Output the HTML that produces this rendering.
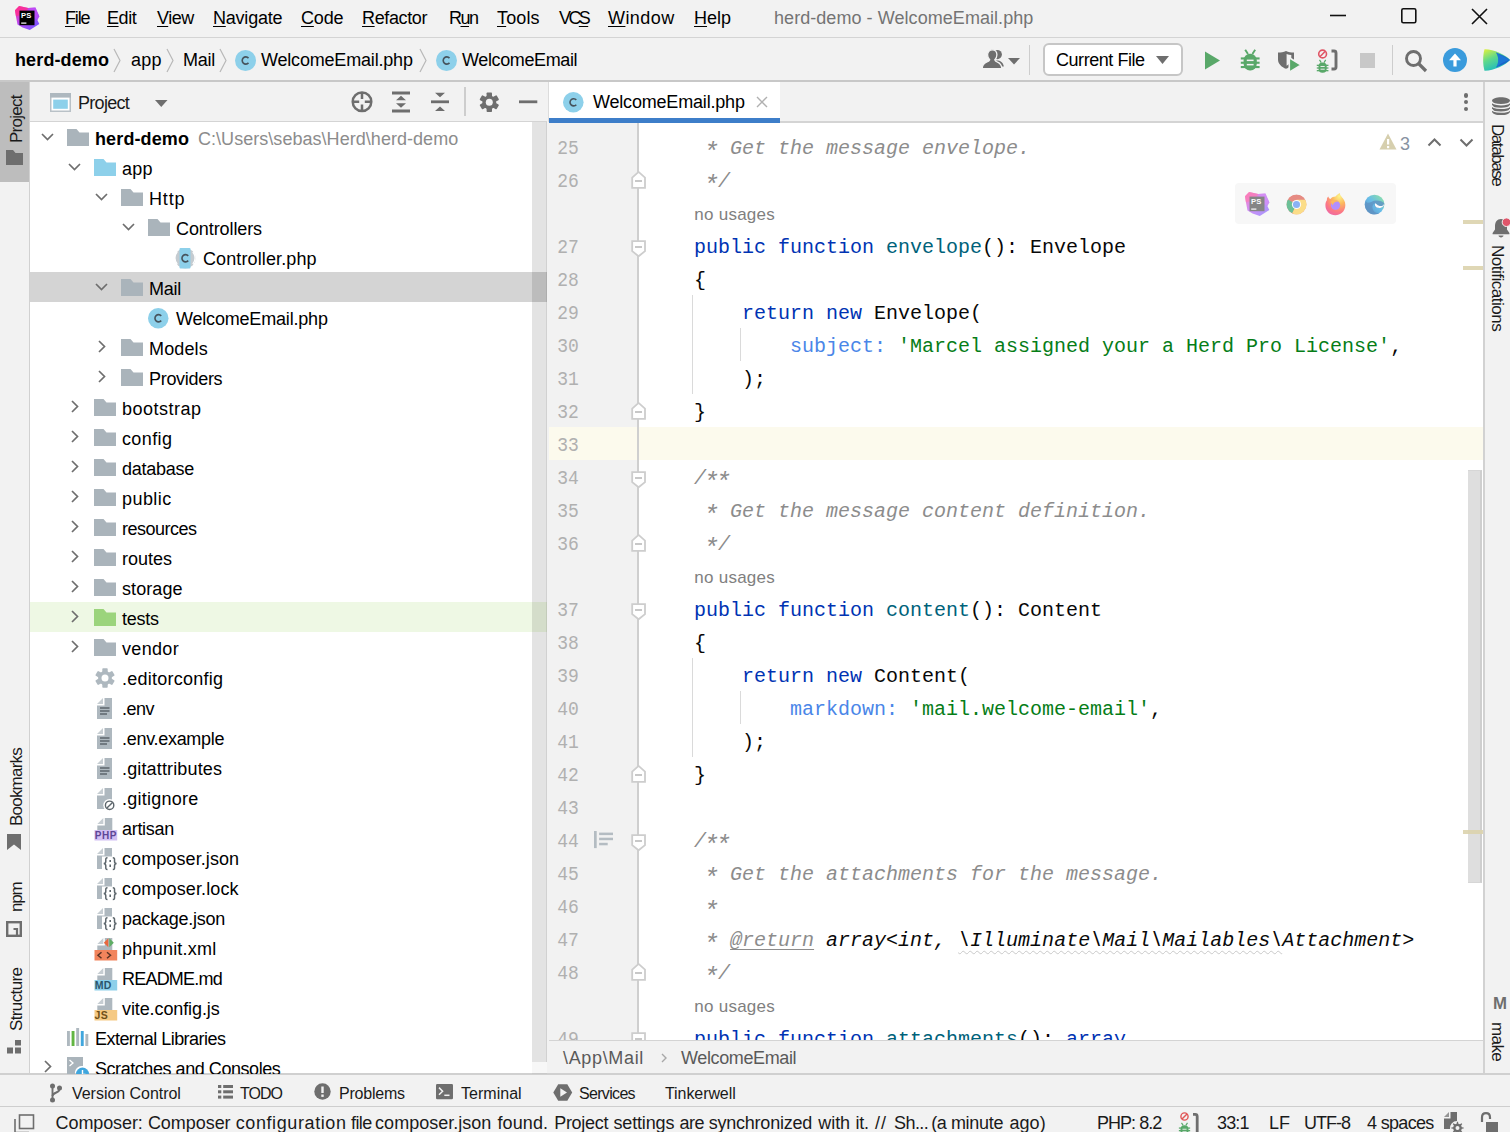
<!DOCTYPE html><html><head><meta charset="utf-8"><title>herd-demo - WelcomeEmail.php</title>
<style>

*{box-sizing:border-box;margin:0;padding:0}
html,body{width:1510px;height:1132px;overflow:hidden;background:#f2f2f2}
body{font-family:"Liberation Sans",sans-serif;font-size:18px;color:#000;position:relative}
.a{position:absolute}
.t{position:absolute;white-space:pre;line-height:1}
.u{text-decoration:underline;text-underline-offset:1.5px;text-decoration-thickness:1.2px}
.mono{font-family:"Liberation Mono",monospace}
svg{position:absolute;overflow:visible}
.vt{position:absolute;white-space:pre;transform-origin:0 0;font-size:16px;line-height:1;color:#1a1a1a}
/* code */
.ln{position:absolute;left:557.3px;font-family:"Liberation Mono",monospace;font-size:18px;color:#b0b0b0;line-height:33px;height:33px;white-space:pre;transform:scaleY(1.09);transform-origin:0 60%}
.cl{position:absolute;left:647px;font-family:"Liberation Mono",monospace;font-size:20px;line-height:33px;height:33px;white-space:pre;color:#080808}
.k{color:#0033b3}.f{color:#00627a}.s{color:#067d17}.p{color:#4a86e8}.c{color:#8c8c8c;font-style:italic}
.ci{font-style:italic;color:#080808}
.ast{display:inline-block;transform:translate(-1px,4.5px) scale(1.3,1.25)}
.nu{position:absolute;left:694.3px;font-size:17px;letter-spacing:.25px;color:#808080;line-height:33px;height:33px;white-space:pre}
.tr{position:absolute;left:30px;width:517px;height:30px}
.tt{position:absolute;white-space:pre;line-height:30px;height:30px;font-size:18px;margin-top:2.3px}

</style></head><body>
<div class="a" style="left:0px;top:0px;width:1510px;height:37px;background:#f2f2f2;"></div>
<div class="a" style="left:0px;top:37px;width:1510px;height:1px;background:#d4d4d4;"></div>
<div class="a" style="left:0px;top:38px;width:1510px;height:43px;background:#f2f2f2;"></div>
<div class="a" style="left:0px;top:80.3px;width:1510px;height:1.7px;background:#c8c8c8;"></div>
<div class="a" style="left:0px;top:82px;width:29px;height:993px;background:#f2f2f2;"></div>
<div class="a" style="left:0px;top:82px;width:29px;height:100px;background:#bdbdbd;"></div>
<div class="a" style="left:29px;top:82px;width:1px;height:993px;background:#d1d1d1;"></div>
<div class="a" style="left:30px;top:82px;width:517px;height:39px;background:#f2f2f2;"></div>
<div class="a" style="left:30px;top:121px;width:517px;height:1px;background:#d4d4d4;"></div>
<div class="a" style="left:30px;top:122px;width:517px;height:953px;background:#ffffff;"></div>
<div class="a" style="left:546.6px;top:82px;width:2.4px;height:993px;background:#f2f2f2;"></div>
<div class="a" style="left:547.6px;top:82px;width:1px;height:40px;background:#dcdcdc;"></div>
<div class="a" style="left:549px;top:82px;width:935px;height:40px;background:#f2f2f2;"></div>
<div class="a" style="left:549px;top:82px;width:231px;height:36px;background:#ffffff;"></div>
<div class="a" style="left:549px;top:121px;width:935px;height:2px;background:#d4d4d4;"></div>
<div class="a" style="left:549px;top:118px;width:231px;height:5px;background:#3d7ec9;"></div>
<div class="a" style="left:549px;top:123px;width:935px;height:918px;background:#ffffff;"></div>
<div class="a" style="left:549px;top:123px;width:89px;height:918px;background:#f2f2f2;"></div>
<div class="a" style="left:637.1px;top:123px;width:1.8px;height:918px;background:#cfcfcf;"></div>
<div class="a" style="left:549px;top:1041px;width:935px;height:33px;background:#f2f2f2;"></div>
<div class="a" style="left:549px;top:1040px;width:935px;height:1px;background:#d4d4d4;"></div>
<div class="a" style="left:1484px;top:82px;width:26px;height:993px;background:#f2f2f2;"></div>
<div class="a" style="left:1483px;top:82px;width:2px;height:993px;background:#d2d2d2;"></div>
<div class="a" style="left:0px;top:1073px;width:1510px;height:2px;background:#d0d0d0;"></div>
<div class="a" style="left:0px;top:1075px;width:1510px;height:31px;background:#f2f2f2;"></div>
<div class="a" style="left:0px;top:1106px;width:1510px;height:1.6px;background:#cecece;"></div>
<div class="a" style="left:0px;top:1107px;width:1510px;height:25px;background:#f2f2f2;"></div>
<svg style="left:15.0px;top:6.0px;opacity:1;" width="25" height="24.0" viewBox="0 0 25 24"><defs><linearGradient id="psg27" x1="0" y1="0" x2="1" y2="1"><stop offset="0" stop-color="#ff2d90"/><stop offset=".45" stop-color="#b74af7"/><stop offset="1" stop-color="#6b57ff"/></linearGradient></defs><path d="M0 4.3 L4.1 0 L13.2 2 L20.4 1.5 L24.3 10.3 L22.4 13.9 L24.3 17.9 L14.8 24 L7.6 21.4 L2.5 18.6 L0.9 9.9 Z" fill="url(#psg27)"/><path d="M0 4.3 L4.1 0 L13.2 2 L9 9 L0.9 9.9 Z" fill="#ff2d90" opacity=".75"/><path d="M13.2 2 L20.4 1.5 L24.3 10.3 L22.4 13.9 L17 10 Z" fill="#c04cf5" opacity=".7"/><rect x="4.5" y="4.6" width="15" height="14.6" fill="#000"/><rect x="6.2" y="16.5" width="5.2" height="1.2" fill="#fff"/><text x="5.9" y="12.2" font-family="Liberation Sans" font-weight="bold" font-size="7.6" fill="#fff" letter-spacing="0.2">PS</text></svg>
<div class="t" style="left:65px;top:9px;font-size:18px;color:#000;letter-spacing:-1.169px;"><span class="u">F</span>ile</div>
<div class="t" style="left:107px;top:9px;font-size:18px;color:#000;letter-spacing:-0.44px;"><span class="u">E</span>dit</div>
<div class="t" style="left:157px;top:9px;font-size:18px;color:#000;letter-spacing:-0.464px;"><span class="u">V</span>iew</div>
<div class="t" style="left:213px;top:9px;font-size:18px;color:#000;letter-spacing:-0.22px;"><span class="u">N</span>avigate</div>
<div class="t" style="left:301px;top:9px;font-size:18px;color:#000;letter-spacing:-0.14px;"><span class="u">C</span>ode</div>
<div class="t" style="left:362px;top:9px;font-size:18px;color:#000;letter-spacing:-0.36px;"><span class="u">R</span>efactor</div>
<div class="t" style="left:449px;top:9px;font-size:18px;color:#000;letter-spacing:-1.511px;">R<span class="u">u</span>n</div>
<div class="t" style="left:497px;top:9px;font-size:18px;color:#000;letter-spacing:0.145px;"><span class="u">T</span>ools</div>
<div class="t" style="left:559px;top:9px;font-size:18px;color:#000;letter-spacing:-2.603px;">VC<span class="u">S</span></div>
<div class="t" style="left:608px;top:9px;font-size:18px;color:#000;letter-spacing:0.436px;"><span class="u">W</span>indow</div>
<div class="t" style="left:694px;top:9px;font-size:18px;color:#000;letter-spacing:0.026px;"><span class="u">H</span>elp</div>
<div class="t" style="left:774px;top:9px;font-size:18px;color:#747474;letter-spacing:0.057px;">herd-demo - WelcomeEmail.php</div>
<svg style="left:1329px;top:8px;" width="20" height="20" viewBox="0 0 20 20"><path d="M1 7.5 H17" stroke="#111" stroke-width="1.6"/></svg>
<svg style="left:1400px;top:7px;" width="18" height="18" viewBox="0 0 18 18"><rect x="1.8" y="1.8" width="14" height="14" rx="1.5" fill="none" stroke="#111" stroke-width="1.6"/></svg>
<svg style="left:1471px;top:8px;" width="18" height="18" viewBox="0 0 18 18"><path d="M1 1 L16 16 M16 1 L1 16" stroke="#111" stroke-width="1.6"/></svg>
<div class="t" style="left:15px;top:51px;font-size:18px;color:#000;letter-spacing:0.124px;font-weight:bold;">herd-demo</div>
<svg style="left:113px;top:48px;" width="8" height="25" viewBox="0 0 8 25"><path d="M1 1 L7 12.5 L1 24" fill="none" stroke="#b8b8b8" stroke-width="1.2"/></svg>
<div class="t" style="left:131px;top:51px;font-size:18px;color:#000;letter-spacing:0.182px;">app</div>
<svg style="left:166px;top:48px;" width="8" height="25" viewBox="0 0 8 25"><path d="M1 1 L7 12.5 L1 24" fill="none" stroke="#b8b8b8" stroke-width="1.2"/></svg>
<div class="t" style="left:183px;top:51px;font-size:18px;color:#000;letter-spacing:-0.269px;">Mail</div>
<svg style="left:219px;top:48px;" width="8" height="25" viewBox="0 0 8 25"><path d="M1 1 L7 12.5 L1 24" fill="none" stroke="#b8b8b8" stroke-width="1.2"/></svg>
<svg style="left:234.5px;top:50.0px;" width="21" height="21" viewBox="0 0 21 21"><circle cx="10.5" cy="10.5" r="10.5" fill="#8dd0ea"/><path d="M13 7.6 A3.6 3.6 0 1 0 13 12.4" fill="none" stroke="#46535c" stroke-width="1.6" transform="translate(0.5 0.5)"/></svg>
<div class="t" style="left:261px;top:51px;font-size:18px;color:#000;letter-spacing:-0.188px;">WelcomeEmail.php</div>
<svg style="left:419px;top:48px;" width="8" height="25" viewBox="0 0 8 25"><path d="M1 1 L7 12.5 L1 24" fill="none" stroke="#b8b8b8" stroke-width="1.2"/></svg>
<svg style="left:435.5px;top:50.0px;" width="21" height="21" viewBox="0 0 21 21"><circle cx="10.5" cy="10.5" r="10.5" fill="#8dd0ea"/><path d="M13 7.6 A3.6 3.6 0 1 0 13 12.4" fill="none" stroke="#46535c" stroke-width="1.6" transform="translate(0.5 0.5)"/></svg>
<div class="t" style="left:462px;top:51px;font-size:18px;color:#000;letter-spacing:-0.372px;">WelcomeEmail</div>
<svg style="left:982px;top:49px;" width="23" height="20" viewBox="0 0 23 20"><g fill="#6e6e6e"><circle cx="15.3" cy="5.6" r="4.6"/><path d="M12 12 C16 10.5 21 12 21.8 17.5 H14 Z"/><g stroke="#f2f2f2" stroke-width="1.3"><path d="M10.3 0.8 C13.2 0.8 14.9 3 14.9 5.8 C14.9 8 14 9.8 12.8 10.8 C13 12 14 12.6 15.5 13.2 C18.5 14.4 19.6 16 19.8 19.6 H0.2 C0.4 16 1.5 14.4 4.5 13.2 C6.3 12.5 7.4 12 7.7 10.8 C6.5 9.8 5.6 8 5.6 5.8 C5.6 3 7.4 0.8 10.3 0.8 Z"/></g></g></svg>
<svg style="left:1008px;top:58px;" width="12" height="7" viewBox="0 0 12 7"><path d="M0 0 H12 L6 6.5 Z" fill="#6e6e6e"/></svg>
<div class="a" style="left:1029px;top:45px;width:1px;height:30px;background:#cdcdcd;"></div>
<div class="a" style="left:1043px;top:43px;width:140px;height:32.5px;background:#fff;border:2px solid #c6c6c6;border-radius:6px;"></div>
<div class="t" style="left:1056px;top:51px;font-size:18px;color:#000;letter-spacing:-0.45px;">Current File</div>
<svg style="left:1156px;top:56px;" width="14" height="9" viewBox="0 0 14 9"><path d="M0 0 H13 L6.5 8 Z" fill="#6e6e6e"/></svg>
<svg style="left:1204px;top:51px;" width="17" height="19" viewBox="0 0 17 19"><path d="M1 0.5 L16 9.5 L1 18.5 Z" fill="#59a869"/></svg>
<svg style="left:1238px;top:48px;" width="24" height="24" viewBox="0 0 24 24"><g transform="translate(12.2 12) scale(1.0)"><rect x="-6.6" y="-6.2" width="13.2" height="16.6" rx="6.3" ry="6.6" fill="#59a869"/><g fill="#59a869"><rect x="-9.4" y="-2.6" width="5" height="2.1"/><rect x="-9.4" y="1.7" width="5" height="2.1"/><rect x="-9.4" y="6" width="5" height="2.1"/><rect x="4.4" y="-2.6" width="5" height="2.1"/><rect x="4.4" y="1.7" width="5" height="2.1"/><rect x="4.4" y="6" width="5" height="2.1"/></g><path d="M-5 -10.3 L-2.2 -6 M5 -10.3 L2.2 -6" stroke="#59a869" stroke-width="1.9" fill="none"/><rect x="-3.4" y="-0.4" width="6.8" height="1.5" fill="#f2f2f2"/><rect x="-3.4" y="3.9" width="6.8" height="1.5" fill="#f2f2f2"/></g></svg>
<svg style="left:1278px;top:51px;" width="24" height="22" viewBox="0 0 24 22"><path d="M0 1.6 C3 1.6 5.5 1 8 0 C10.5 1 13 1.6 16 1.6 V8.5 C16 13 12 16.3 8 17.8 C4 16.3 0 13 0 8.5 Z" fill="#6e6e6e"/><path d="M8.6 3 C10.2 3.6 11.8 4 13.3 4.1 V8.5 C13.3 11 11.3 13.3 8.6 14.7 Z" fill="#f2f2f2"/><path d="M11.3 6.8 L23.2 14 L11.3 21.2 Z" fill="#59a869" stroke="#f2f2f2" stroke-width="1.6"/></svg>
<svg style="left:1316px;top:48px;" width="24" height="26" viewBox="0 0 24 26"><path d="M15.5 3 H18 A2 2 0 0 1 20 5 V19 A2 2 0 0 1 18 21 H15.5" fill="none" stroke="#6e6e6e" stroke-width="2.9"/><circle cx="6.6" cy="6" r="3.9" fill="none" stroke="#e05565" stroke-width="1.6"/><path d="M3.9 8.7 L9.3 3.3" stroke="#e05565" stroke-width="1.6"/><g transform="translate(6.6 18.3) scale(0.62)"><rect x="-6.6" y="-6.2" width="13.2" height="16.6" rx="6.3" ry="6.6" fill="#59a869"/><g fill="#59a869"><rect x="-9.4" y="-2.6" width="5" height="2.1"/><rect x="-9.4" y="1.7" width="5" height="2.1"/><rect x="-9.4" y="6" width="5" height="2.1"/><rect x="4.4" y="-2.6" width="5" height="2.1"/><rect x="4.4" y="1.7" width="5" height="2.1"/><rect x="4.4" y="6" width="5" height="2.1"/></g><path d="M-5 -10.3 L-2.2 -6 M5 -10.3 L2.2 -6" stroke="#59a869" stroke-width="1.9" fill="none"/><rect x="-3.4" y="-0.4" width="6.8" height="1.5" fill="#f2f2f2"/><rect x="-3.4" y="3.9" width="6.8" height="1.5" fill="#f2f2f2"/></g></svg>
<div class="a" style="left:1360px;top:53px;width:15px;height:15px;background:#c8c8c8;"></div>
<div class="a" style="left:1392px;top:45px;width:1px;height:30px;background:#cdcdcd;"></div>
<svg style="left:1404px;top:49px;" width="24" height="24" viewBox="0 0 24 24"><circle cx="9.5" cy="9.5" r="7" fill="none" stroke="#6e6e6e" stroke-width="2.9"/><path d="M14.5 14.5 L22 22" stroke="#6e6e6e" stroke-width="3.2"/></svg>
<svg style="left:1443px;top:48px;" width="24" height="24" viewBox="0 0 24 24"><circle cx="12" cy="12" r="12" fill="#3a9bdc"/><path d="M12 5.5 L18 12.2 H13.6 V18.5 H10.4 V12.2 H6 Z" fill="#fff"/></svg>
<svg style="left:1483px;top:49px;" width="27" height="22" viewBox="0 0 27 22"><defs><linearGradient id="spg" x1="0" y1="0" x2="0.6" y2="1"><stop offset="0" stop-color="#e6f23a"/><stop offset=".45" stop-color="#5fd98a"/><stop offset="1" stop-color="#12b5c9"/></linearGradient></defs><path d="M1.5 0.3 C10 0 23 6 27 11 C23 16 10 22 1.5 21.7 C-0.3 16 -0.3 6 1.5 0.3 Z" fill="url(#spg)"/><path d="M13 3.5 C19 5.5 24 8.5 27 11 C24 13.5 19 16.5 13 18.5 C16 14 16 8 13 3.5 Z" fill="#1b63c9"/><path d="M13 3.5 C16 8 16 14 13 18.5 C17 15 20 13 27 11 Z" fill="#1f86e0" opacity=".55"/></svg>
<svg style="left:49.5px;top:93px;" width="21" height="19" viewBox="0 0 21 19"><rect x="0.75" y="0.75" width="19.5" height="17.5" fill="#fff" stroke="#b9c1c7" stroke-width="1.5"/><rect x="0" y="0" width="21" height="4.6" fill="#aeb8bf"/><rect x="3.2" y="6.6" width="14.6" height="9.2" fill="#8dd0ea"/></svg>
<div class="t" style="left:78px;top:94px;font-size:18px;color:#1a1a1a;letter-spacing:-0.704px;">Project</div>
<svg style="left:155px;top:100px;" width="13" height="8" viewBox="0 0 13 8"><path d="M0 0 H12.5 L6.25 7 Z" fill="#6e6e6e"/></svg>
<svg style="left:351px;top:91px;" width="22" height="22" viewBox="0 0 22 22"><circle cx="11" cy="10.8" r="9.3" fill="none" stroke="#6e6e6e" stroke-width="2.5"/><path d="M11 1.5 V8 M11 13.6 V20 M1.7 10.8 H8.2 M13.8 10.8 H20.3" stroke="#6e6e6e" stroke-width="2.5"/></svg>
<svg style="left:392px;top:91px;" width="18" height="22" viewBox="0 0 18 22"><path d="M0 2 H18 M0 20 H18" stroke="#6e6e6e" stroke-width="2.8"/><path d="M9 4.7 L14 9.2 H4 Z M9 16.8 L14 12.3 H4 Z" fill="#6e6e6e"/></svg>
<svg style="left:431px;top:91px;" width="18" height="22" viewBox="0 0 18 22"><path d="M0 10.8 H18" stroke="#6e6e6e" stroke-width="2.8"/><path d="M9 6.3 L14 1.8 H4 Z M9 15.4 L14 20 H4 Z" fill="#6e6e6e"/></svg>
<div class="a" style="left:464px;top:87px;width:1.5px;height:29px;background:#cdcdcd;"></div>
<svg style="left:479px;top:91.5px;" width="21" height="21" viewBox="0 0 21 21"><g transform="translate(10.3 10.3)" fill="#6e6e6e"><circle r="6.9"/><rect x="-2.7" y="-9.8" width="5.4" height="4.4" rx="0.8" transform="rotate(0.0)"/><rect x="-2.7" y="-9.8" width="5.4" height="4.4" rx="0.8" transform="rotate(60.0)"/><rect x="-2.7" y="-9.8" width="5.4" height="4.4" rx="0.8" transform="rotate(120.0)"/><rect x="-2.7" y="-9.8" width="5.4" height="4.4" rx="0.8" transform="rotate(180.0)"/><rect x="-2.7" y="-9.8" width="5.4" height="4.4" rx="0.8" transform="rotate(240.0)"/><rect x="-2.7" y="-9.8" width="5.4" height="4.4" rx="0.8" transform="rotate(300.0)"/><circle r="3.5" fill="#f2f2f2"/></g></svg>
<svg style="left:519px;top:100px;" width="19" height="4" viewBox="0 0 19 4"><path d="M0 1.8 H18.3" stroke="#6e6e6e" stroke-width="2.8"/></svg>
<svg style="left:562.7px;top:91.7px;" width="20.6" height="20.6" viewBox="0 0 20.6 20.6"><circle cx="10.3" cy="10.3" r="10.3" fill="#8dd0ea"/><path d="M13 7.6 A3.6 3.6 0 1 0 13 12.4" fill="none" stroke="#46535c" stroke-width="1.6" transform="translate(0.3000000000000007 0.3000000000000007)"/></svg>
<div class="t" style="left:593px;top:93px;font-size:18px;color:#000;letter-spacing:-0.188px;">WelcomeEmail.php</div>
<svg style="left:756px;top:96px;" width="12" height="12" viewBox="0 0 12 12"><path d="M1 1 L11 11 M11 1 L1 11" stroke="#b0b0b0" stroke-width="1.4"/></svg>
<div class="a" style="left:1463.8px;top:93.3px;width:4.4px;height:4.4px;border-radius:2.2px;background:#6e6e6e"></div>
<div class="a" style="left:1463.8px;top:100px;width:4.4px;height:4.4px;border-radius:2.2px;background:#6e6e6e"></div>
<div class="a" style="left:1463.8px;top:106.5px;width:4.4px;height:4.4px;border-radius:2.2px;background:#6e6e6e"></div>
<div class="a" style="left:0;top:122px;width:548px;height:952px;overflow:hidden"><div class="a" style="left:0;top:-122px;width:548px;height:1132px">
<svg style="left:41px;top:132.7px;" width="13" height="8" viewBox="0 0 13 8"><path d="M1 1 L6.5 6.5 L12 1" fill="none" stroke="#6e6e6e" stroke-width="1.7"/></svg>
<svg style="left:67px;top:128.5px;" width="22" height="17" viewBox="0 0 22 17"><path d="M0 0 H9.5 L12.5 3.5 H22 V17 H0 Z" fill="#aab4bb"/></svg>
<div class="tt" style="left:95px;top:122px;font-weight:bold;letter-spacing:0.124px;">herd-demo</div>
<div class="tt" style="left:198px;top:122px;color:#8c8c8c;letter-spacing:0.039px">C:\Users\sebas\Herd\herd-demo</div>
<svg style="left:68px;top:162.7px;" width="13" height="8" viewBox="0 0 13 8"><path d="M1 1 L6.5 6.5 L12 1" fill="none" stroke="#6e6e6e" stroke-width="1.7"/></svg>
<svg style="left:94px;top:158.5px;" width="22" height="17" viewBox="0 0 22 17"><path d="M0 0 H9.5 L12.5 3.5 H22 V17 H0 Z" fill="#8dd0ea"/></svg>
<div class="tt" style="left:122px;top:152px;letter-spacing:0.182px;">app</div>
<svg style="left:95px;top:192.7px;" width="13" height="8" viewBox="0 0 13 8"><path d="M1 1 L6.5 6.5 L12 1" fill="none" stroke="#6e6e6e" stroke-width="1.7"/></svg>
<svg style="left:121px;top:188.5px;" width="22" height="17" viewBox="0 0 22 17"><path d="M0 0 H9.5 L12.5 3.5 H22 V17 H0 Z" fill="#aab4bb"/></svg>
<div class="tt" style="left:149px;top:182px;letter-spacing:0.831px;">Http</div>
<svg style="left:122px;top:222.7px;" width="13" height="8" viewBox="0 0 13 8"><path d="M1 1 L6.5 6.5 L12 1" fill="none" stroke="#6e6e6e" stroke-width="1.7"/></svg>
<svg style="left:148px;top:218.5px;" width="22" height="17" viewBox="0 0 22 17"><path d="M0 0 H9.5 L12.5 3.5 H22 V17 H0 Z" fill="#aab4bb"/></svg>
<div class="tt" style="left:176px;top:212px;letter-spacing:-0.092px;">Controllers</div>
<svg style="left:175.3px;top:247.95px;" width="20.5" height="20.5" viewBox="0 0 20.5 20.5"><circle cx="10.25" cy="10.25" r="10.25" fill="#c4cbd0"/><rect x="4.5" y="0" width="11" height="20.5" rx="1" fill="#8dd0ea"/><path d="M2.2 4 A9 9 0 0 0 2.2 16" fill="none" stroke="#fff" stroke-width="1.3"/><path d="M17.8 4 A9 9 0 0 1 17.8 16" fill="none" stroke="#fff" stroke-width="1.3"/><path d="M13 7.6 A3.6 3.6 0 1 0 13 12.4" fill="none" stroke="#46535c" stroke-width="1.6" transform="translate(0.25 0.25)"/></svg>
<div class="tt" style="left:203px;top:242px;letter-spacing:0.118px;">Controller.php</div>
<div class="a" style="left:30px;top:272px;width:516.6px;height:30px;background:#d4d4d4;"></div>
<svg style="left:95px;top:282.7px;" width="13" height="8" viewBox="0 0 13 8"><path d="M1 1 L6.5 6.5 L12 1" fill="none" stroke="#6e6e6e" stroke-width="1.7"/></svg>
<svg style="left:121px;top:278.5px;" width="22" height="17" viewBox="0 0 22 17"><path d="M0 0 H9.5 L12.5 3.5 H22 V17 H0 Z" fill="#aab4bb"/></svg>
<div class="tt" style="left:149px;top:272px;letter-spacing:-0.269px;">Mail</div>
<svg style="left:148.3px;top:307.75px;" width="20.5" height="20.5" viewBox="0 0 20.5 20.5"><circle cx="10.25" cy="10.25" r="10.25" fill="#8dd0ea"/><path d="M13 7.6 A3.6 3.6 0 1 0 13 12.4" fill="none" stroke="#46535c" stroke-width="1.6" transform="translate(0.25 0.25)"/></svg>
<div class="tt" style="left:176px;top:302px;letter-spacing:-0.188px;">WelcomeEmail.php</div>
<svg style="left:98px;top:340.0px;" width="8" height="13" viewBox="0 0 8 13"><path d="M1 1 L6.5 6.5 L1 12" fill="none" stroke="#6e6e6e" stroke-width="1.7"/></svg>
<svg style="left:121px;top:338.5px;" width="22" height="17" viewBox="0 0 22 17"><path d="M0 0 H9.5 L12.5 3.5 H22 V17 H0 Z" fill="#aab4bb"/></svg>
<div class="tt" style="left:149px;top:332px;letter-spacing:0.136px;">Models</div>
<svg style="left:98px;top:370.0px;" width="8" height="13" viewBox="0 0 8 13"><path d="M1 1 L6.5 6.5 L1 12" fill="none" stroke="#6e6e6e" stroke-width="1.7"/></svg>
<svg style="left:121px;top:368.5px;" width="22" height="17" viewBox="0 0 22 17"><path d="M0 0 H9.5 L12.5 3.5 H22 V17 H0 Z" fill="#aab4bb"/></svg>
<div class="tt" style="left:149px;top:362px;letter-spacing:-0.303px;">Providers</div>
<svg style="left:71px;top:400.0px;" width="8" height="13" viewBox="0 0 8 13"><path d="M1 1 L6.5 6.5 L1 12" fill="none" stroke="#6e6e6e" stroke-width="1.7"/></svg>
<svg style="left:94px;top:398.5px;" width="22" height="17" viewBox="0 0 22 17"><path d="M0 0 H9.5 L12.5 3.5 H22 V17 H0 Z" fill="#aab4bb"/></svg>
<div class="tt" style="left:122px;top:392px;letter-spacing:0.481px;">bootstrap</div>
<svg style="left:71px;top:430.0px;" width="8" height="13" viewBox="0 0 8 13"><path d="M1 1 L6.5 6.5 L1 12" fill="none" stroke="#6e6e6e" stroke-width="1.7"/></svg>
<svg style="left:94px;top:428.5px;" width="22" height="17" viewBox="0 0 22 17"><path d="M0 0 H9.5 L12.5 3.5 H22 V17 H0 Z" fill="#aab4bb"/></svg>
<div class="tt" style="left:122px;top:422px;letter-spacing:0.373px;">config</div>
<svg style="left:71px;top:460.0px;" width="8" height="13" viewBox="0 0 8 13"><path d="M1 1 L6.5 6.5 L1 12" fill="none" stroke="#6e6e6e" stroke-width="1.7"/></svg>
<svg style="left:94px;top:458.5px;" width="22" height="17" viewBox="0 0 22 17"><path d="M0 0 H9.5 L12.5 3.5 H22 V17 H0 Z" fill="#aab4bb"/></svg>
<div class="tt" style="left:122px;top:452px;letter-spacing:-0.253px;">database</div>
<svg style="left:71px;top:490.0px;" width="8" height="13" viewBox="0 0 8 13"><path d="M1 1 L6.5 6.5 L1 12" fill="none" stroke="#6e6e6e" stroke-width="1.7"/></svg>
<svg style="left:94px;top:488.5px;" width="22" height="17" viewBox="0 0 22 17"><path d="M0 0 H9.5 L12.5 3.5 H22 V17 H0 Z" fill="#aab4bb"/></svg>
<div class="tt" style="left:122px;top:482px;letter-spacing:0.436px;">public</div>
<svg style="left:71px;top:520.0px;" width="8" height="13" viewBox="0 0 8 13"><path d="M1 1 L6.5 6.5 L1 12" fill="none" stroke="#6e6e6e" stroke-width="1.7"/></svg>
<svg style="left:94px;top:518.5px;" width="22" height="17" viewBox="0 0 22 17"><path d="M0 0 H9.5 L12.5 3.5 H22 V17 H0 Z" fill="#aab4bb"/></svg>
<div class="tt" style="left:122px;top:512px;letter-spacing:-0.49px;">resources</div>
<svg style="left:71px;top:550.0px;" width="8" height="13" viewBox="0 0 8 13"><path d="M1 1 L6.5 6.5 L1 12" fill="none" stroke="#6e6e6e" stroke-width="1.7"/></svg>
<svg style="left:94px;top:548.5px;" width="22" height="17" viewBox="0 0 22 17"><path d="M0 0 H9.5 L12.5 3.5 H22 V17 H0 Z" fill="#aab4bb"/></svg>
<div class="tt" style="left:122px;top:542px;letter-spacing:-0.024px;">routes</div>
<svg style="left:71px;top:580.0px;" width="8" height="13" viewBox="0 0 8 13"><path d="M1 1 L6.5 6.5 L1 12" fill="none" stroke="#6e6e6e" stroke-width="1.7"/></svg>
<svg style="left:94px;top:578.5px;" width="22" height="17" viewBox="0 0 22 17"><path d="M0 0 H9.5 L12.5 3.5 H22 V17 H0 Z" fill="#aab4bb"/></svg>
<div class="tt" style="left:122px;top:572px;letter-spacing:0.077px;">storage</div>
<div class="a" style="left:30px;top:602px;width:516.6px;height:30px;background:#eef8e4;"></div>
<svg style="left:71px;top:610.0px;" width="8" height="13" viewBox="0 0 8 13"><path d="M1 1 L6.5 6.5 L1 12" fill="none" stroke="#6e6e6e" stroke-width="1.7"/></svg>
<svg style="left:94px;top:608.5px;" width="22" height="17" viewBox="0 0 22 17"><path d="M0 0 H9.5 L12.5 3.5 H22 V17 H0 Z" fill="#9bd47c"/></svg>
<div class="tt" style="left:122px;top:602px;letter-spacing:-0.226px;">tests</div>
<svg style="left:71px;top:640.0px;" width="8" height="13" viewBox="0 0 8 13"><path d="M1 1 L6.5 6.5 L1 12" fill="none" stroke="#6e6e6e" stroke-width="1.7"/></svg>
<svg style="left:94px;top:638.5px;" width="22" height="17" viewBox="0 0 22 17"><path d="M0 0 H9.5 L12.5 3.5 H22 V17 H0 Z" fill="#aab4bb"/></svg>
<div class="tt" style="left:122px;top:632px;letter-spacing:0.333px;">vendor</div>
<svg style="left:94.7px;top:668.0px;" width="20" height="20" viewBox="0 0 20 20"><g transform="translate(10 10)" fill="#aeb8bf"><circle r="6.9"/><rect x="-2.7" y="-9.8" width="5.4" height="4.4" rx="0.8" transform="rotate(0.0)"/><rect x="-2.7" y="-9.8" width="5.4" height="4.4" rx="0.8" transform="rotate(60.0)"/><rect x="-2.7" y="-9.8" width="5.4" height="4.4" rx="0.8" transform="rotate(120.0)"/><rect x="-2.7" y="-9.8" width="5.4" height="4.4" rx="0.8" transform="rotate(180.0)"/><rect x="-2.7" y="-9.8" width="5.4" height="4.4" rx="0.8" transform="rotate(240.0)"/><rect x="-2.7" y="-9.8" width="5.4" height="4.4" rx="0.8" transform="rotate(300.0)"/><circle r="3.5" fill="#fff"/></g></svg>
<div class="tt" style="left:122px;top:662px;letter-spacing:0.246px;">.editorconfig</div>
<svg style="left:97.3px;top:697.5px;" width="15" height="21" viewBox="0 0 15 21"><path d="M7.5 0 V7.5 H0 V21 H15 V0 Z" fill="#aeb8bf"/><path d="M6 0 V6 H0 Z" fill="#c6cdd2"/><g stroke="#5d666c" stroke-width="1.5"><path d="M3 10 H12.5"/><path d="M3 13 H12.5"/><path d="M3 16 H10"/></g></svg>
<div class="tt" style="left:122px;top:692px;letter-spacing:-0.507px;">.env</div>
<svg style="left:97.3px;top:727.5px;" width="15" height="21" viewBox="0 0 15 21"><path d="M7.5 0 V7.5 H0 V21 H15 V0 Z" fill="#aeb8bf"/><path d="M6 0 V6 H0 Z" fill="#c6cdd2"/><g stroke="#5d666c" stroke-width="1.5"><path d="M3 10 H12.5"/><path d="M3 13 H12.5"/><path d="M3 16 H10"/></g></svg>
<div class="tt" style="left:122px;top:722px;letter-spacing:-0.293px;">.env.example</div>
<svg style="left:97.3px;top:757.5px;" width="15" height="21" viewBox="0 0 15 21"><path d="M7.5 0 V7.5 H0 V21 H15 V0 Z" fill="#aeb8bf"/><path d="M6 0 V6 H0 Z" fill="#c6cdd2"/><g stroke="#5d666c" stroke-width="1.5"><path d="M3 10 H12.5"/><path d="M3 13 H12.5"/><path d="M3 16 H10"/></g></svg>
<div class="tt" style="left:122px;top:752px;letter-spacing:0.15px;">.gitattributes</div>
<svg style="left:97.3px;top:787.5px;" width="22" height="24" viewBox="0 0 22 24"><path d="M7.5 0 V7.5 H0 V21 H15 V0 Z" fill="#aeb8bf"/><path d="M6 0 V6 H0 Z" fill="#c6cdd2"/><circle cx="12.6" cy="17.3" r="6.3" fill="#fff"/><circle cx="12.6" cy="17.3" r="4.2" fill="none" stroke="#5d666c" stroke-width="1.4"/><path d="M9.7 20.2 L15.5 14.4" stroke="#5d666c" stroke-width="1.4"/></svg>
<div class="tt" style="left:122px;top:782px;letter-spacing:0.25px;">.gitignore</div>
<svg style="left:94px;top:817.5px;" width="24" height="23" viewBox="0 0 24 23"><path d="M10.8 0 V7.5 H3.3 V12 H18.3 V0 Z" fill="#aeb8bf"/><path d="M9.3 0 V6 H3.3 Z" fill="#c6cdd2"/><rect x="0.5" y="12" width="22.7" height="10.5" fill="#d2bff3"/><text x="11.8" y="21" text-anchor="middle" font-family="Liberation Sans" font-weight="bold" font-size="10" fill="#5d4596" letter-spacing="0.5">PHP</text></svg>
<div class="tt" style="left:122px;top:812px;letter-spacing:-0.304px;">artisan</div>
<svg style="left:97.3px;top:847.5px;" width="22" height="24" viewBox="0 0 22 24"><path d="M7.5 0 V7.5 H0 V21 H15 V0 Z" fill="#aeb8bf"/><path d="M6 0 V6 H0 Z" fill="#c6cdd2"/><rect x="5" y="8.5" width="16" height="14" fill="#fff"/><g fill="none" stroke="#5d666c" stroke-width="1.5"><path d="M10.5 9.7 C8.3 9.7 8.8 11.5 8.8 13.2 C8.8 14.7 8.2 15.4 6.8 15.6 C8.2 15.8 8.8 16.5 8.8 18 C8.8 19.7 8.3 21.5 10.5 21.5"/><path d="M15.8 9.7 C18 9.7 17.5 11.5 17.5 13.2 C17.5 14.7 18.1 15.4 19.5 15.6 C18.1 15.8 17.5 16.5 17.5 18 C17.5 19.7 18 21.5 15.8 21.5"/></g><rect x="12.4" y="12" width="1.6" height="2" fill="#5d666c"/><rect x="12.4" y="16.5" width="1.6" height="2.5" fill="#5d666c"/></svg>
<div class="tt" style="left:122px;top:842px;letter-spacing:0.087px;">composer.json</div>
<svg style="left:97.3px;top:877.5px;" width="22" height="24" viewBox="0 0 22 24"><path d="M7.5 0 V7.5 H0 V21 H15 V0 Z" fill="#aeb8bf"/><path d="M6 0 V6 H0 Z" fill="#c6cdd2"/><rect x="5" y="8.5" width="16" height="14" fill="#fff"/><g fill="none" stroke="#5d666c" stroke-width="1.5"><path d="M10.5 9.7 C8.3 9.7 8.8 11.5 8.8 13.2 C8.8 14.7 8.2 15.4 6.8 15.6 C8.2 15.8 8.8 16.5 8.8 18 C8.8 19.7 8.3 21.5 10.5 21.5"/><path d="M15.8 9.7 C18 9.7 17.5 11.5 17.5 13.2 C17.5 14.7 18.1 15.4 19.5 15.6 C18.1 15.8 17.5 16.5 17.5 18 C17.5 19.7 18 21.5 15.8 21.5"/></g><rect x="12.4" y="12" width="1.6" height="2" fill="#5d666c"/><rect x="12.4" y="16.5" width="1.6" height="2.5" fill="#5d666c"/></svg>
<div class="tt" style="left:122px;top:872px;letter-spacing:0.129px;">composer.lock</div>
<svg style="left:97.3px;top:907.5px;" width="22" height="24" viewBox="0 0 22 24"><path d="M7.5 0 V7.5 H0 V21 H15 V0 Z" fill="#aeb8bf"/><path d="M6 0 V6 H0 Z" fill="#c6cdd2"/><rect x="5" y="8.5" width="16" height="14" fill="#fff"/><g fill="none" stroke="#5d666c" stroke-width="1.5"><path d="M10.5 9.7 C8.3 9.7 8.8 11.5 8.8 13.2 C8.8 14.7 8.2 15.4 6.8 15.6 C8.2 15.8 8.8 16.5 8.8 18 C8.8 19.7 8.3 21.5 10.5 21.5"/><path d="M15.8 9.7 C18 9.7 17.5 11.5 17.5 13.2 C17.5 14.7 18.1 15.4 19.5 15.6 C18.1 15.8 17.5 16.5 17.5 18 C17.5 19.7 18 21.5 15.8 21.5"/></g><rect x="12.4" y="12" width="1.6" height="2" fill="#5d666c"/><rect x="12.4" y="16.5" width="1.6" height="2.5" fill="#5d666c"/></svg>
<div class="tt" style="left:122px;top:902px;letter-spacing:-0.252px;">package.json</div>
<svg style="left:94px;top:937.5px;" width="24" height="23" viewBox="0 0 24 23"><path d="M10.8 0 V7.5 H3.3 V12 H18.3 V0 Z" fill="#aeb8bf"/><path d="M9.3 0 V6 H3.3 Z" fill="#c6cdd2"/><path d="M9.8 4.7 L14.3 0.2 V9.2 Z" fill="#e8683f"/><path d="M15.3 0.2 L19.8 4.7 L15.3 9.2 Z" fill="#5fad65"/><rect x="0.5" y="12" width="22.7" height="10.5" fill="#f2845c"/><path d="M7.5 14.2 L4 17.2 L7.5 20.2 M13 14.2 L16.5 17.2 L13 20.2" fill="none" stroke="#5a3325" stroke-width="1.5"/></svg>
<div class="tt" style="left:122px;top:932px;letter-spacing:0.215px;">phpunit.xml</div>
<svg style="left:94px;top:967.5px;" width="24" height="23" viewBox="0 0 24 23"><path d="M10.8 0 V7.5 H3.3 V12 H18.3 V0 Z" fill="#aeb8bf"/><path d="M9.3 0 V6 H3.3 Z" fill="#c6cdd2"/><rect x="0.5" y="12" width="22.7" height="10.5" fill="#8dd0ea"/><text x="9.3" y="21" text-anchor="middle" font-family="Liberation Sans" font-weight="bold" font-size="10.5" fill="#2a566e" letter-spacing="0.4">MD</text></svg>
<div class="tt" style="left:122px;top:962px;letter-spacing:-0.788px;">README.md</div>
<svg style="left:94px;top:997.5px;" width="24" height="23" viewBox="0 0 24 23"><path d="M10.8 0 V7.5 H3.3 V12 H18.3 V0 Z" fill="#aeb8bf"/><path d="M9.3 0 V6 H3.3 Z" fill="#c6cdd2"/><rect x="0.5" y="12" width="22.7" height="10.5" fill="#f5c983"/><text x="7.300000000000001" y="21" text-anchor="middle" font-family="Liberation Sans" font-weight="bold" font-size="10.5" fill="#6f5018" letter-spacing="0.4">JS</text></svg>
<div class="tt" style="left:122px;top:992px;letter-spacing:-0.103px;">vite.config.js</div>
<svg style="left:67.2px;top:1028px;" width="22" height="18" viewBox="0 0 22 18"><rect x="0" y="3" width="2.9" height="15" fill="#aeb8bf"/><rect x="4.6" y="3" width="2.9" height="15" fill="#62b543"/><rect x="9.2" y="0" width="2.9" height="18" fill="#aeb8bf"/><rect x="13.8" y="3" width="2.9" height="15" fill="#40a6dd"/><rect x="18.4" y="6" width="2.9" height="12" fill="#aeb8bf"/></svg>
<div class="tt" style="left:95px;top:1022px;letter-spacing:-0.538px;">External Libraries</div>
<svg style="left:44px;top:1060.0px;" width="8" height="13" viewBox="0 0 8 13"><path d="M1 1 L6.5 6.5 L1 12" fill="none" stroke="#6e6e6e" stroke-width="1.7"/></svg>
<svg style="left:67px;top:1057px;" width="22" height="24" viewBox="0 0 22 24"><path d="M0 0 H16 V9 A7 7 0 0 0 8 17 H0 Z" fill="#aab4bb"/><path d="M2.5 3 L6 6 L2.5 9" fill="none" stroke="#fff" stroke-width="1.3"/><circle cx="15.5" cy="17" r="6.5" fill="#40a6dd"/><path d="M15.5 13 V17.5 H18.5" fill="none" stroke="#fff" stroke-width="1.4"/></svg>
<div class="tt" style="left:95px;top:1052px;letter-spacing:-0.443px;">Scratches and Consoles</div>
</div></div>
<div class="a" style="left:532px;top:122px;width:14.6px;height:952px;background:rgba(0,0,0,0.03);"></div>
<div class="a" style="left:532px;top:122px;width:14.6px;height:940px;background:rgba(0,0,0,0.08);border-right:1.2px solid rgba(0,0,0,0.08);"></div>
<div class="a" style="left:0;top:124px;width:1483px;height:916px;overflow:hidden"><div class="a" style="left:0;top:-124px;width:1483px;height:1132px">
<div class="a" style="left:549px;top:427px;width:934px;height:33px;background:#fcfaed;"></div>
<div class="a" style="left:637.1px;top:427px;width:1.8px;height:33px;background:#cfcfcf;"></div>
<div class="a" style="left:691.5px;top:295px;width:1.5px;height:99px;background:#dadada;"></div>
<div class="a" style="left:691.5px;top:658px;width:1.5px;height:99px;background:#dadada;"></div>
<div class="a" style="left:739.5px;top:328px;width:1.5px;height:33px;background:#dadada;"></div>
<div class="a" style="left:739.5px;top:691px;width:1.5px;height:33px;background:#dadada;"></div>
<div class="ln" style="top:133px">25</div>
<div class="cl" style="left:694.0px;top:132px"><span class="c"> <span class="ast">*</span> Get the message envelope.</span></div>
<div class="ln" style="top:166px">26</div>
<svg style="left:0;top:0" width="1" height="1"><path d="M632.2 187.8 H645.0 V177.6 L638.6 171.9 L632.2 177.6 Z" fill="#fff" stroke="#cdcdcd" stroke-width="1.8" stroke-linejoin="miter"/><path d="M635 181.0 h7" stroke="#c6c6c6" stroke-width="1.9"/></svg>
<div class="cl" style="left:694.0px;top:165px"><span class="c"> <span class="ast">*</span>/</span></div>
<div class="nu" style="top:198px">no usages</div>
<div class="ln" style="top:232px">27</div>
<svg style="left:0;top:0" width="1" height="1"><path d="M632.2 241.1 H645.0 V251.1 L638.6 256.3 L632.2 251.1 Z" fill="#fff" stroke="#cdcdcd" stroke-width="1.8" stroke-linejoin="miter"/><path d="M635 247.0 h7" stroke="#c6c6c6" stroke-width="1.9"/></svg>
<div class="cl" style="left:694.0px;top:231px"><span class="k">public function </span><span class="f">envelope</span>(): Envelope</div>
<div class="ln" style="top:265px">28</div>
<div class="cl" style="left:694.0px;top:264px">{</div>
<div class="ln" style="top:298px">29</div>
<div class="cl" style="left:742.0px;top:297px"><span class="k">return new </span>Envelope(</div>
<div class="ln" style="top:331px">30</div>
<div class="cl" style="left:790.0px;top:330px"><span class="p">subject: </span><span class="s">'Marcel assigned your a Herd Pro License'</span>,</div>
<div class="ln" style="top:364px">31</div>
<div class="cl" style="left:742.0px;top:363px">);</div>
<div class="ln" style="top:397px">32</div>
<svg style="left:0;top:0" width="1" height="1"><path d="M632.2 418.8 H645.0 V408.6 L638.6 402.9 L632.2 408.6 Z" fill="#fff" stroke="#cdcdcd" stroke-width="1.8" stroke-linejoin="miter"/><path d="M635 412.0 h7" stroke="#c6c6c6" stroke-width="1.9"/></svg>
<div class="cl" style="left:694.0px;top:396px">}</div>
<div class="ln" style="top:430px">33</div>
<div class="ln" style="top:463px">34</div>
<svg style="left:0;top:0" width="1" height="1"><path d="M632.2 472.1 H645.0 V482.1 L638.6 487.3 L632.2 482.1 Z" fill="#fff" stroke="#cdcdcd" stroke-width="1.8" stroke-linejoin="miter"/><path d="M635 478.0 h7" stroke="#c6c6c6" stroke-width="1.9"/></svg>
<div class="cl" style="left:694.0px;top:462px"><span class="c">/<span class="ast">*</span><span class="ast">*</span></span></div>
<div class="ln" style="top:496px">35</div>
<div class="cl" style="left:694.0px;top:495px"><span class="c"> <span class="ast">*</span> Get the message content definition.</span></div>
<div class="ln" style="top:529px">36</div>
<svg style="left:0;top:0" width="1" height="1"><path d="M632.2 550.8 H645.0 V540.6 L638.6 534.9 L632.2 540.6 Z" fill="#fff" stroke="#cdcdcd" stroke-width="1.8" stroke-linejoin="miter"/><path d="M635 544.0 h7" stroke="#c6c6c6" stroke-width="1.9"/></svg>
<div class="cl" style="left:694.0px;top:528px"><span class="c"> <span class="ast">*</span>/</span></div>
<div class="nu" style="top:561px">no usages</div>
<div class="ln" style="top:595px">37</div>
<svg style="left:0;top:0" width="1" height="1"><path d="M632.2 604.1 H645.0 V614.1 L638.6 619.3 L632.2 614.1 Z" fill="#fff" stroke="#cdcdcd" stroke-width="1.8" stroke-linejoin="miter"/><path d="M635 610.0 h7" stroke="#c6c6c6" stroke-width="1.9"/></svg>
<div class="cl" style="left:694.0px;top:594px"><span class="k">public function </span><span class="f">content</span>(): Content</div>
<div class="ln" style="top:628px">38</div>
<div class="cl" style="left:694.0px;top:627px">{</div>
<div class="ln" style="top:661px">39</div>
<div class="cl" style="left:742.0px;top:660px"><span class="k">return new </span>Content(</div>
<div class="ln" style="top:694px">40</div>
<div class="cl" style="left:790.0px;top:693px"><span class="p">markdown: </span><span class="s">'mail.welcome-email'</span>,</div>
<div class="ln" style="top:727px">41</div>
<div class="cl" style="left:742.0px;top:726px">);</div>
<div class="ln" style="top:760px">42</div>
<svg style="left:0;top:0" width="1" height="1"><path d="M632.2 781.8 H645.0 V771.6 L638.6 765.9 L632.2 771.6 Z" fill="#fff" stroke="#cdcdcd" stroke-width="1.8" stroke-linejoin="miter"/><path d="M635 775.0 h7" stroke="#c6c6c6" stroke-width="1.9"/></svg>
<div class="cl" style="left:694.0px;top:759px">}</div>
<div class="ln" style="top:793px">43</div>
<div class="ln" style="top:826px">44</div>
<svg style="left:0;top:0" width="1" height="1"><path d="M632.2 835.1 H645.0 V845.1 L638.6 850.3 L632.2 845.1 Z" fill="#fff" stroke="#cdcdcd" stroke-width="1.8" stroke-linejoin="miter"/><path d="M635 841.0 h7" stroke="#c6c6c6" stroke-width="1.9"/></svg>
<div class="cl" style="left:694.0px;top:825px"><span class="c">/<span class="ast">*</span><span class="ast">*</span></span></div>
<div class="ln" style="top:859px">45</div>
<div class="cl" style="left:694.0px;top:858px"><span class="c"> <span class="ast">*</span> Get the attachments for the message.</span></div>
<div class="ln" style="top:892px">46</div>
<div class="cl" style="left:694.0px;top:891px"><span class="c"> <span class="ast">*</span></span></div>
<div class="ln" style="top:925px">47</div>
<div class="cl" style="left:694.0px;top:924px"><span class="c"> <span class="ast">*</span> </span><span class="c" style="text-decoration:underline;text-decoration-thickness:1px;text-underline-offset:3px">@return</span><span class="c"> </span><span class="ci">array&lt;int, </span><span class="ci" style="text-decoration:underline wavy #c9c9c9 1px;text-underline-offset:4px">\Illuminate\Mail\Mailables\</span><span class="ci">Attachment&gt;</span></div>
<div class="ln" style="top:958px">48</div>
<svg style="left:0;top:0" width="1" height="1"><path d="M632.2 979.8 H645.0 V969.6 L638.6 963.9 L632.2 969.6 Z" fill="#fff" stroke="#cdcdcd" stroke-width="1.8" stroke-linejoin="miter"/><path d="M635 973.0 h7" stroke="#c6c6c6" stroke-width="1.9"/></svg>
<div class="cl" style="left:694.0px;top:957px"><span class="c"> <span class="ast">*</span>/</span></div>
<div class="nu" style="top:990px">no usages</div>
<div class="ln" style="top:1024px">49</div>
<svg style="left:0;top:0" width="1" height="1"><path d="M632.2 1033.1 H645.0 V1043.1 L638.6 1048.3 L632.2 1043.1 Z" fill="#fff" stroke="#cdcdcd" stroke-width="1.8" stroke-linejoin="miter"/><path d="M635 1039.0 h7" stroke="#c6c6c6" stroke-width="1.9"/></svg>
<div class="cl" style="left:694.0px;top:1023px"><span class="k">public function </span><span class="f">attachments</span>(): <span class="k">array</span></div>
<svg style="left:594px;top:830.8px;" width="20" height="18" viewBox="0 0 20 18"><g fill="#b4bcc2"><rect x="0" y="0" width="2.7" height="17.1"/><rect x="5.1" y="1.6" width="13.9" height="2.5"/><rect x="5.1" y="6.7" width="13.9" height="2.5"/><rect x="5.1" y="11.8" width="8.6" height="2.5"/></g></svg>
</div></div>
<svg style="left:1379px;top:133px;" width="18" height="17" viewBox="0 0 18 17"><path d="M9 0.5 L17.5 16.5 H0.5 Z" fill="#d6cfae"/><rect x="8" y="6" width="2.2" height="5.5" fill="#fff"/><rect x="8" y="13" width="2.2" height="2.2" fill="#fff"/></svg>
<div class="t" style="left:1400px;top:135px;font-size:18px;color:#8892a1;">3</div>
<svg style="left:1427px;top:137px;" width="15" height="10" viewBox="0 0 15 10"><path d="M1.5 8.5 L7.5 2.5 L13.5 8.5" fill="none" stroke="#6e6e6e" stroke-width="2"/></svg>
<svg style="left:1459px;top:138px;" width="15" height="10" viewBox="0 0 15 10"><path d="M1.5 1.5 L7.5 7.5 L13.5 1.5" fill="none" stroke="#6e6e6e" stroke-width="2"/></svg>
<div class="a" style="left:1235px;top:183px;width:161px;height:41px;background:#f7f7f7;border-radius:4px;"></div>
<svg style="left:1244.5px;top:192.0px;opacity:0.6;" width="25" height="24.0" viewBox="0 0 25 24"><defs><linearGradient id="psg1257" x1="0" y1="0" x2="1" y2="1"><stop offset="0" stop-color="#ff2d90"/><stop offset=".45" stop-color="#b74af7"/><stop offset="1" stop-color="#6b57ff"/></linearGradient></defs><path d="M0 4.3 L4.1 0 L13.2 2 L20.4 1.5 L24.3 10.3 L22.4 13.9 L24.3 17.9 L14.8 24 L7.6 21.4 L2.5 18.6 L0.9 9.9 Z" fill="url(#psg1257)"/><path d="M0 4.3 L4.1 0 L13.2 2 L9 9 L0.9 9.9 Z" fill="#ff2d90" opacity=".75"/><path d="M13.2 2 L20.4 1.5 L24.3 10.3 L22.4 13.9 L17 10 Z" fill="#c04cf5" opacity=".7"/><rect x="4.5" y="4.6" width="15" height="14.6" fill="#3a3a3a"/><rect x="6.2" y="16.5" width="5.2" height="1.2" fill="#fff"/><text x="5.9" y="12.2" font-family="Liberation Sans" font-weight="bold" font-size="7.6" fill="#fff" letter-spacing="0.2">PS</text></svg>
<svg style="left:1285.5px;top:193.5px;opacity:0.6;" width="21" height="21" viewBox="0 0 32 32"><circle cx="16" cy="16" r="15" fill="#db4437"/><path d="M16 16 L3 8.5 A15 15 0 0 0 9.5 29.5 Z" fill="#0f9d58"/><path d="M16 16 L9.5 29.5 A15 15 0 0 0 29 8.5 L16 8.5 Z" fill="#ffcd40"/><path d="M3 8.5 A15 15 0 0 1 29 8.5 L16 8.5 Z" fill="#db4437"/><circle cx="16" cy="16" r="7" fill="#fff"/><circle cx="16" cy="16" r="5.4" fill="#4285f4"/></svg>
<svg style="left:1323.5px;top:192.5px;opacity:0.65;" width="23" height="23" viewBox="0 0 32 32"><defs><radialGradient id="ffg1335" cx=".7" cy=".15" r="1"><stop offset="0" stop-color="#fff44f"/><stop offset=".35" stop-color="#ff980e"/><stop offset=".7" stop-color="#ff3647"/><stop offset="1" stop-color="#e31587"/></radialGradient></defs><path d="M16 5 C18 2 21 1 22 0 C22 4 26 6 28 10 C31 15 30 23 25 27.5 C20 32 11 32 6 27 C1 22 1 14 4 10 C4 8 4.5 6 6 5 C6.5 7 8 8 9 8.5 C11 6 13.5 5 16 5 Z" fill="url(#ffg1335)"/><circle cx="16" cy="17" r="6.5" fill="#9059ff"/><path d="M9 12 C12 9 18 9 21 12 C17 11 13 13 12 17 Z" fill="#ff980e"/></svg>
<svg style="left:1363.5px;top:193.5px;opacity:0.65;" width="21" height="21" viewBox="0 0 32 32"><defs><linearGradient id="eg1374" x1="0" y1="1" x2="1" y2="0"><stop offset="0" stop-color="#0c59a4"/><stop offset=".5" stop-color="#1b9de2"/><stop offset="1" stop-color="#5ee06b"/></linearGradient></defs><circle cx="16" cy="16" r="15" fill="url(#eg1374)"/><path d="M31 14 C31 20 25 22 20 21 C16 20 15 17 17 14 C14 15 12 18 13 22 C14 27 19 30 24 28.5 C20 32 12 32 7 28 C2 24 0 17 3 11 C6 17 12 10 18 10 C25 10 29 12 31 14 Z" fill="#0c59a4" opacity=".75"/><path d="M17 14 C16 17 17 20 21 21 C26 22 31 19 31 14 C30 18 26 19 23 18 C20 17 19 15 17 14 Z" fill="#fff"/></svg>
<div class="a" style="left:1468px;top:470px;width:14px;height:413px;background:#dedede;border-right:2px solid #cfcfcf;border-top:1px solid #d6d6d6;border-bottom:1px solid #d6d6d6;"></div>
<div class="a" style="left:1463px;top:220px;width:20px;height:3.5px;background:#dcd3ad;opacity:.9;"></div>
<div class="a" style="left:1463px;top:266px;width:20px;height:3.5px;background:#dcd3ad;opacity:.9;"></div>
<div class="a" style="left:1463px;top:830px;width:20px;height:3.5px;background:#dcd3ad;opacity:.9;"></div>
<div class="t" style="left:563px;top:1049px;font-size:18px;color:#5a5a5a;letter-spacing:0.658px;">\App\Mail</div>
<svg style="left:660px;top:1052px;" width="8" height="12" viewBox="0 0 8 12"><path d="M2 2 L6 6 L2 10" fill="none" stroke="#a8a8a8" stroke-width="1.4"/></svg>
<div class="t" style="left:681px;top:1049px;font-size:18px;color:#5a5a5a;letter-spacing:-0.372px;">WelcomeEmail</div>
<div class="vt" style="left:8.0px;top:142.5px;font-size:17px;color:#1a1a1a;letter-spacing:-0.743px;height:17px;line-height:17px;transform:rotate(-90deg)">Project</div>
<svg style="left:6px;top:150px;" width="17" height="15" viewBox="0 0 17 15"><path d="M0 0 H7 L9.5 3 H17 V15 H0 Z" fill="#6e6e6e"/></svg>
<div class="vt" style="left:8.0px;top:826px;font-size:17px;color:#1a1a1a;letter-spacing:-0.783px;height:17px;line-height:17px;transform:rotate(-90deg)">Bookmarks</div>
<svg style="left:7px;top:834px;" width="14" height="16" viewBox="0 0 14 16"><path d="M0 0 H14 V16 L7 10.5 L0 16 Z" fill="#6e6e6e"/></svg>
<div class="vt" style="left:8.0px;top:912px;font-size:17px;color:#1a1a1a;letter-spacing:-1.157px;height:17px;line-height:17px;transform:rotate(-90deg)">npm</div>
<svg style="left:6px;top:921px;" width="16" height="16" viewBox="0 0 16 16"><rect x="1.2" y="1.2" width="13.6" height="13.6" fill="none" stroke="#6e6e6e" stroke-width="2.4"/><path d="M7.5 8 H11 V14" fill="none" stroke="#6e6e6e" stroke-width="2.2"/></svg>
<div class="vt" style="left:8.0px;top:1031px;font-size:17px;color:#1a1a1a;letter-spacing:-0.627px;height:17px;line-height:17px;transform:rotate(-90deg)">Structure</div>
<svg style="left:7px;top:1040px;" width="14" height="14" viewBox="0 0 14 14"><g fill="#6e6e6e"><rect x="8" y="0" width="6" height="5.5"/><rect x="0" y="7.5" width="6" height="6"/><rect x="8" y="7.5" width="6" height="6"/></g></svg>
<svg style="left:1491.5px;top:97px;" width="18" height="19" viewBox="0 0 18 19"><path d="M0 3.8 C0 -0.9 18 -0.9 18 3.8 V14.4 C18 19.3 0 19.3 0 14.4 Z" fill="#6e6e6e"/><g fill="none" stroke="#f2f2f2" stroke-width="1.3"><path d="M0 4.6 C0 8.8 18 8.8 18 4.6"/><path d="M0 8.3 C0 12.5 18 12.5 18 8.3"/><path d="M0 12 C0 16.2 18 16.2 18 12"/></g></svg>
<div class="vt" style="left:1506.1px;top:124px;font-size:17px;color:#1a1a1a;letter-spacing:-1.431px;height:17px;line-height:17px;transform:rotate(90deg)">Database</div>
<svg style="left:1492px;top:218px;" width="20" height="20" viewBox="0 0 20 20"><path d="M9 1 C5 1 3 4.2 3 8 V11.5 L0.6 15 V16.3 H17.4 V15 L15 11.5 V8 C15 4.2 13 1 9 1 Z" fill="#6e6e6e"/><path d="M6.5 17.6 H11.5 C11.5 20 6.5 20 6.5 17.6 Z" fill="#6e6e6e"/><circle cx="14.5" cy="4.2" r="4.3" fill="#e0556a" stroke="#f2f2f2" stroke-width="1"/></svg>
<div class="vt" style="left:1506.1px;top:245px;font-size:17px;color:#1a1a1a;letter-spacing:-0.487px;height:17px;line-height:17px;transform:rotate(90deg)">Notifications</div>
<div class="t" style="left:1493px;top:996px;font-size:16px;color:#6e6e6e;font-weight:bold;transform:scaleX(1.05);transform-origin:0 0;">M</div>
<div class="vt" style="left:1506.1px;top:1022px;font-size:17px;color:#1a1a1a;letter-spacing:-0.604px;height:17px;line-height:17px;transform:rotate(90deg)">make</div>
<svg style="left:49px;top:1083px;" width="14" height="20" viewBox="0 0 14 20"><g fill="none" stroke="#6e6e6e" stroke-width="1.9"><path d="M3.5 2 V18"/><path d="M3.5 13 C3.5 9 10.5 10.5 10.5 6"/></g><circle cx="3.5" cy="3" r="2.5" fill="#6e6e6e"/><circle cx="3.5" cy="17" r="2.5" fill="#6e6e6e"/><circle cx="10.5" cy="5" r="2.5" fill="#6e6e6e"/></svg>
<div class="t" style="left:72px;top:1086.3px;font-size:16px;color:#1a1a1a;letter-spacing:-0.034px;">Version Control</div>
<svg style="left:217.8px;top:1084.8px;" width="15" height="14" viewBox="0 0 15 14"><g fill="#6e6e6e"><rect x="0" y="0" width="3.3" height="3"/><rect x="5.2" y="0" width="9.8" height="3"/><rect x="0" y="5.3" width="3.3" height="3"/><rect x="5.2" y="5.3" width="9.8" height="3"/><rect x="0" y="10.6" width="3.3" height="3"/><rect x="5.2" y="10.6" width="9.8" height="3"/></g></svg>
<div class="t" style="left:240px;top:1086.3px;font-size:16px;color:#1a1a1a;letter-spacing:-0.973px;">TODO</div>
<svg style="left:314px;top:1083px;" width="17" height="17" viewBox="0 0 17 17"><circle cx="8.5" cy="8.5" r="8.2" fill="#6e6e6e"/><rect x="7.3" y="3.5" width="2.4" height="6.5" fill="#f2f2f2"/><rect x="7.3" y="11.5" width="2.4" height="2.4" fill="#f2f2f2"/></svg>
<div class="t" style="left:339px;top:1086.3px;font-size:16px;color:#1a1a1a;letter-spacing:-0.208px;">Problems</div>
<svg style="left:436.3px;top:1084px;" width="17" height="15.2" viewBox="0 0 17 15.2"><rect x="0" y="0" width="17" height="15.2" rx="1.2" fill="#6e6e6e"/><path d="M3 3.6 L6.6 7.2 L3 10.8" fill="none" stroke="#f2f2f2" stroke-width="1.5"/><path d="M8.3 11.3 H13.5" stroke="#f2f2f2" stroke-width="1.5"/></svg>
<div class="t" style="left:461px;top:1086.3px;font-size:16px;color:#1a1a1a;letter-spacing:0.022px;">Terminal</div>
<svg style="left:553px;top:1083.5px;" width="19.5" height="17" viewBox="0 0 19.5 17"><path d="M5.2 0.3 H14.3 L19.2 8.5 L14.3 16.7 H5.2 L0.3 8.5 Z" fill="#6e6e6e"/><path d="M7.3 4.3 L14 8.5 L7.3 12.7 Z" fill="#f2f2f2"/></svg>
<div class="t" style="left:579px;top:1086.3px;font-size:16px;color:#1a1a1a;letter-spacing:-0.677px;">Services</div>
<div class="t" style="left:665px;top:1086.3px;font-size:16px;color:#1a1a1a;letter-spacing:-0.078px;">Tinkerwell</div>
<svg style="left:14px;top:1114px;" width="21" height="20" viewBox="0 0 21 20"><rect x="5.5" y="1" width="14" height="13.5" fill="none" stroke="#6e6e6e" stroke-width="1.6"/><path d="M1 5 V18.5 H15" fill="none" stroke="#6e6e6e" stroke-width="1.6"/></svg>
<div class="t" style="left:55.6px;top:1114px;font-size:18px;color:#1a1a1a;letter-spacing:-0.103px;">Composer:</div>
<div class="t" style="left:147.9px;top:1114px;font-size:18px;color:#1a1a1a;letter-spacing:-0.046px;">Composer</div>
<div class="t" style="left:235.7px;top:1114px;font-size:18px;color:#1a1a1a;letter-spacing:0.603px;">configuration</div>
<div class="t" style="left:351.0px;top:1114px;font-size:18px;color:#1a1a1a;letter-spacing:-0.6px;">file</div>
<div class="t" style="left:375.1px;top:1114px;font-size:18px;color:#1a1a1a;letter-spacing:0.012px;">composer.json</div>
<div class="t" style="left:497.4px;top:1114px;font-size:18px;color:#1a1a1a;letter-spacing:0.133px;">found.</div>
<div class="t" style="left:554.2px;top:1114px;font-size:18px;color:#1a1a1a;letter-spacing:-0.304px;">Project</div>
<div class="t" style="left:613.4px;top:1114px;font-size:18px;color:#1a1a1a;letter-spacing:-0.134px;">settings</div>
<div class="t" style="left:679.6px;top:1114px;font-size:18px;color:#1a1a1a;letter-spacing:-0.6px;">are</div>
<div class="t" style="left:708.8px;top:1114px;font-size:18px;color:#1a1a1a;letter-spacing:-0.241px;">synchronized</div>
<div class="t" style="left:818.3px;top:1114px;font-size:18px;color:#1a1a1a;letter-spacing:-0.069px;">with</div>
<div class="t" style="left:855.5px;top:1114px;font-size:18px;color:#1a1a1a;letter-spacing:-0.203px;">it.</div>
<div class="t" style="left:875.1px;top:1114px;font-size:18px;color:#1a1a1a;letter-spacing:0.8px;">//</div>
<div class="t" style="left:894.1px;top:1114px;font-size:18px;color:#1a1a1a;letter-spacing:-0.6px;">Sh...</div>
<div class="t" style="left:931.3px;top:1114px;font-size:18px;color:#1a1a1a;letter-spacing:-0.6px;">(a</div>
<div class="t" style="left:950.9px;top:1114px;font-size:18px;color:#1a1a1a;letter-spacing:-0.304px;">minute</div>
<div class="t" style="left:1009.4px;top:1114px;font-size:18px;color:#1a1a1a;letter-spacing:0.093px;">ago)</div>
<div class="t" style="left:1097px;top:1114px;font-size:18px;color:#1a1a1a;letter-spacing:-0.977px;">PHP: 8.2</div>
<svg style="left:1179px;top:1111px;" width="22" height="24" viewBox="0 0 22 24"><path d="M14 3.4 H16.2 A2 2 0 0 1 18.2 5.4 V24" fill="none" stroke="#6e6e6e" stroke-width="2.8"/><circle cx="5.5" cy="5.5" r="3.6" fill="none" stroke="#e05555" stroke-width="1.4"/><path d="M3 8 L8 3" stroke="#e05555" stroke-width="1.4"/><g transform="translate(5.5 18) scale(0.6)"><rect x="-6.6" y="-6.2" width="13.2" height="16.6" rx="6.3" ry="6.6" fill="#59a869"/><g fill="#59a869"><rect x="-9.4" y="-2.6" width="5" height="2.1"/><rect x="-9.4" y="1.7" width="5" height="2.1"/><rect x="-9.4" y="6" width="5" height="2.1"/><rect x="4.4" y="-2.6" width="5" height="2.1"/><rect x="4.4" y="1.7" width="5" height="2.1"/><rect x="4.4" y="6" width="5" height="2.1"/></g><path d="M-5 -10.3 L-2.2 -6 M5 -10.3 L2.2 -6" stroke="#59a869" stroke-width="1.9" fill="none"/><rect x="-3.4" y="-0.4" width="6.8" height="1.5" fill="#f2f2f2"/><rect x="-3.4" y="3.9" width="6.8" height="1.5" fill="#f2f2f2"/></g></svg>
<div class="t" style="left:1217px;top:1114px;font-size:18px;color:#1a1a1a;letter-spacing:-0.879px;">33:1</div>
<div class="t" style="left:1269px;top:1114px;font-size:18px;color:#1a1a1a;">LF</div>
<div class="t" style="left:1304px;top:1114px;font-size:18px;color:#1a1a1a;letter-spacing:-0.997px;">UTF-8</div>
<div class="t" style="left:1367px;top:1114px;font-size:18px;color:#1a1a1a;letter-spacing:-0.677px;">4 spaces</div>
<svg style="left:1444px;top:1112px;" width="20" height="22" viewBox="0 0 20 22"><path d="M6.5 0 V6.5 H0 V17 H6 A7 7 0 0 1 13 9 V0 Z" fill="#6e6e6e"/><path d="M5 0 V5 H0 Z" fill="#6e6e6e" opacity=".7"/><path d="M19.68 15.47 L19.68 16.53 L17.82 16.86 L17.16 18.44 L18.25 19.99 L17.49 20.75 L15.94 19.66 L14.36 20.32 L14.03 22.18 L12.97 22.18 L12.64 20.32 L11.06 19.66 L9.51 20.75 L8.75 19.99 L9.84 18.44 L9.18 16.86 L7.32 16.53 L7.32 15.47 L9.18 15.14 L9.84 13.56 L8.75 12.01 L9.51 11.25 L11.06 12.34 L12.64 11.68 L12.97 9.82 L14.03 9.82 L14.36 11.68 L15.94 12.34 L17.49 11.25 L18.25 12.01 L17.16 13.56 L17.82 15.14 Z M15.5 16 A2.0 2.0 0 1 0 11.5 16 A2.0 2.0 0 1 0 15.5 16 Z" fill="#6e6e6e" fill-rule="evenodd"/></svg>
<svg style="left:1479px;top:1112px;" width="20" height="21" viewBox="0 0 20 21"><path d="M3 10 V5.5 C3 2.5 5 1.2 7 1.2 C9 1.2 11 2.5 11 5.5 V7" fill="none" stroke="#6e6e6e" stroke-width="2.2"/><rect x="7" y="10" width="12" height="11" fill="#6e6e6e"/></svg>
</body></html>
